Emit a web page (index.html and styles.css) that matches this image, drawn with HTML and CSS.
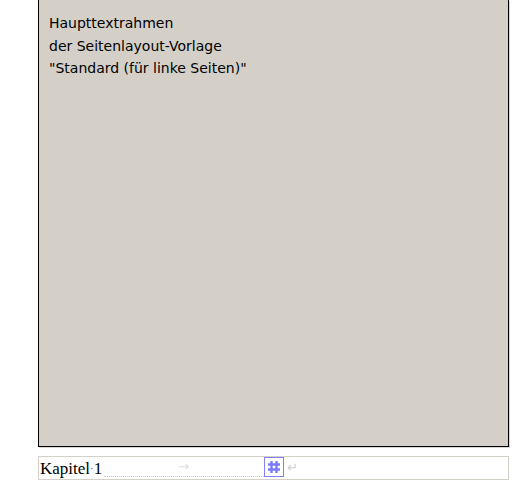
FILE: index.html
```html
<!DOCTYPE html>
<html>
<head>
  <title>Seitenlayout</title>
  <link rel="stylesheet" href="styles.css">
</head>
<body>
  <div class="page">
    <div class="text-frame">
      <p>Haupttextrahmen<br>der Seitenlayout-Vorlage<br>"Standard (für linke Seiten)"</p>
    </div>

    <div class="footer-frame">
      <span class="chapter">Kapitel<span class="space-dot">·</span>1</span>
      <span class="tab-fill">
        <span class="tab-arrow">&#8594;</span>
      </span>
      <span class="field-mark">
        <svg width="14" height="14" viewBox="0 0 14 14">
          <path d="M4.5 1v12M9.5 1v12M1 4.5h12M1 9.5h12" stroke="#7a7aff" stroke-width="2.4" fill="none"/>
        </svg>
      </span>
      <span class="return-mark">&#8629;</span>
    </div>
  </div>
</body>
</html>
```

FILE: styles.css
```css
body {
  margin: 0;
  background-color: #fff;
  font-family: "DejaVu Sans", sans-serif;
}

.page {
  padding-left: 38px;
  width: 471px;
}

.text-frame {
  background-color: #d4d0c8;
  border: 1px solid #000;
  border-top: none;
  height: 446px;
  box-shadow: 1px 1px 0 #d8d6d0;
}

.text-frame p {
  margin: 0;
  padding: 12px 0 0 10px;
  font-size: 14px;
  line-height: 22.5px;
  color: #000;
}

.footer-frame {
  margin-top: 9px;
  height: 22px;
  border: 1px solid #d4d0c8;
  display: flex;
  align-items: flex-end;
  font-family: "Liberation Serif", serif;
  font-size: 17px;
  line-height: 20px;
}

.chapter {
  padding-left: 1px;
}

.space-dot {
  font-size: 11px;
  vertical-align: 2px;
  color: #555;
}

.tab-fill {
  width: 160px;
  margin-left: 2px;
  margin-bottom: 2px;
  border-bottom: 1px dotted #c8c8c8;
  height: 14px;
  position: relative;
}

.tab-arrow {
  position: absolute;
  left: 74px;
  top: -5px;
  color: #e0e0e0;
  font-family: "DejaVu Sans", sans-serif;
  font-size: 13px;
}

.field-mark {
  width: 18px;
  height: 18px;
  border: 1px solid #8080ff;
  display: flex;
  align-items: center;
  justify-content: center;
  align-self: flex-start;
}

.return-mark {
  color: #d0d0d0;
  font-family: "DejaVu Sans", sans-serif;
  font-size: 13px;
  margin-left: 3px;
  align-self: center;
}
```
